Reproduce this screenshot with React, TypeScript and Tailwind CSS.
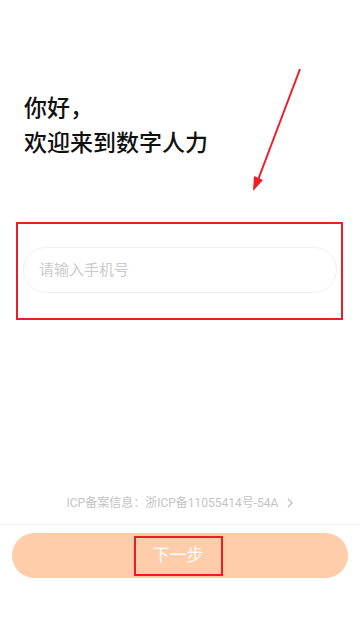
import React from "react";

export default function App() {
  return (
    <div className="relative w-full h-[619px] bg-white flex flex-col font-['Roboto','Noto_Sans_CJK_SC',sans-serif] overflow-hidden">
      {/* Greeting */}
      <div className="px-6 pt-[91px] text-[23px] leading-[35px] font-medium text-[#111]">
        <div>你好，</div>
        <div>欢迎来到数字人力</div>
      </div>

      {/* Phone input, outlined by annotation box */}
      <div className="mt-[61px] ml-4 w-[327px] h-[98px] border-2 border-[#ee1c24] pt-[23px] pl-[5px]">
        <input
          type="tel"
          placeholder="请输入手机号"
          className="w-[314px] h-[46px] rounded-full border border-[#efefef] pl-[15px] pr-4 text-[15px] text-[#333] placeholder:text-[#cbcbcb] outline-none bg-white"
        />
      </div>

      <div className="flex-1" />

      {/* ICP info */}
      <div className="flex items-center justify-center gap-[9px] text-xs leading-4 text-[#c4c4c4]">
        <span>ICP备案信息：浙ICP备11055414号-54A</span>
        <svg width="6" height="10" viewBox="0 0 6 10" fill="none">
          <path d="M1 1l4 4-4 4" stroke="#bdbdbd" strokeWidth="1.2" />
        </svg>
      </div>

      <div className="mt-[13px] h-px bg-[#f4f4f4]" />

      {/* Next button */}
      <div className="px-3 pt-2 pb-[41px]">
        <button className="w-full h-[45px] rounded-full bg-[#ffcda9] flex items-center justify-center">
          <span className="w-[89px] h-[40px] border-2 border-[#ee1c24] flex items-center justify-center text-white text-[17px] -ml-1">
            下一步
          </span>
        </button>
      </div>

      {/* Annotation arrow */}
      <svg
        className="absolute left-0 top-0 pointer-events-none"
        width="360"
        height="619"
        viewBox="0 0 360 619"
      >
        <line x1="300" y1="69" x2="258" y2="180" stroke="#ee1c24" strokeWidth="2" />
        <polygon points="253,191 254,176 263,180" fill="#ee1c24" />
      </svg>
    </div>
  );
}
